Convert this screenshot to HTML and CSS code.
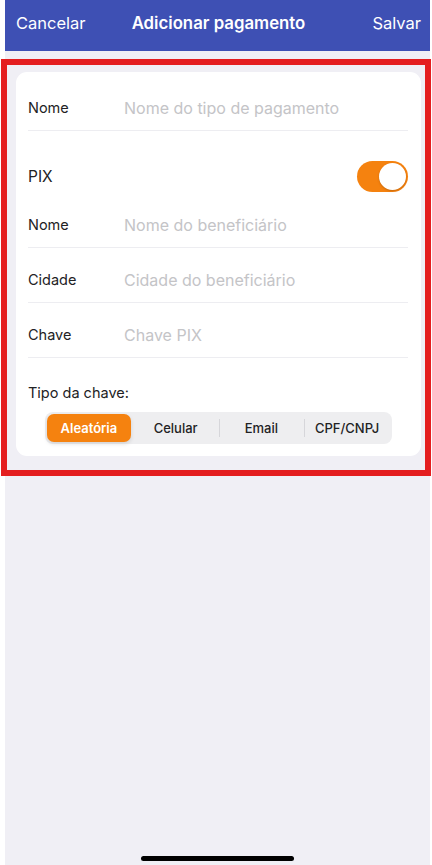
FILE: index.html
```html
<!DOCTYPE html>
<html lang="pt-BR">
<head>
<meta charset="utf-8">
<title>Adicionar pagamento</title>
<link rel="stylesheet" href="styles.css">
</head>
<body>
<div class="screen">
  <header class="navbar">
    <span class="nav-btn nav-left">Cancelar</span>
    <span class="nav-title">Adicionar pagamento</span>
    <span class="nav-btn nav-right">Salvar</span>
  </header>

  <main class="content">
    <section class="card">
      <div class="row">
        <span class="label">Nome</span>
        <span class="placeholder">Nome do tipo de pagamento</span>
      </div>

      <div class="toggle-row">
        <span class="pix-label">PIX</span>
        <span class="toggle"><span class="knob"></span></span>
      </div>

      <div class="row">
        <span class="label">Nome</span>
        <span class="placeholder">Nome do beneficiário</span>
      </div>
      <div class="row">
        <span class="label">Cidade</span>
        <span class="placeholder">Cidade do beneficiário</span>
      </div>
      <div class="row">
        <span class="label">Chave</span>
        <span class="placeholder">Chave PIX</span>
      </div>

      <div class="key-type">Tipo da chave:</div>
      <div class="segmented">
        <span class="seg seg-active">Aleatória</span>
        <span class="seg">Celular</span>
        <span class="seg seg-div">Email</span>
        <span class="seg seg-div">CPF/CNPJ</span>
      </div>
    </section>
  </main>

  <div class="home-indicator"></div>
</div>
<div class="highlight"></div>
</body>
</html>
```

FILE: styles.css
```css
* { box-sizing: border-box; }

html, body {
  margin: 0;
  padding: 0;
  background: #ffffff;
}

body {
  font-family: "Inter", "Liberation Sans", sans-serif;
  width: 432px;
  height: 865px;
  position: relative;
  overflow: hidden;
}

.screen {
  margin-left: 5px;
  width: 425px;
  height: 865px;
  background: #f0eff5;
  display: flex;
  flex-direction: column;
}

.navbar {
  height: 51px;
  background: #3e50b4;
  display: grid;
  grid-template-columns: 1fr auto 1fr;
  align-items: center;
  padding: 0 9px 5px 11px;
  color: #ffffff;
}

.nav-btn {
  font-size: 16.5px;
  font-weight: 400;
}

.nav-right { justify-self: end; }

.nav-title {
  font-size: 16.8px;
  font-weight: 600;
}

.content {
  padding: 21px 9px 0 11px;
}

.card {
  background: #ffffff;
  border-radius: 11px;
  padding: 4px 0 12px 0;
}

.row {
  height: 55px;
  margin: 0 13px 0 12px;
  padding-top: 9px;
  display: flex;
  align-items: center;
  border-bottom: 1px solid #ededf1;
}

.label {
  width: 96px;
  flex: none;
  font-size: 14.5px;
  color: #222224;
}

.placeholder {
  font-size: 16px;
  color: #c4c4c7;
}

.toggle-row {
  margin: 30px 13px 1px 12px;
  height: 31px;
  display: flex;
  align-items: center;
  justify-content: space-between;
}

.pix-label {
  font-size: 15.5px;
  color: #222224;
}

.toggle {
  width: 51px;
  height: 31px;
  border-radius: 16px;
  background: #f5820f;
  position: relative;
  display: block;
}

.knob {
  position: absolute;
  top: 2px;
  right: 2px;
  width: 27px;
  height: 27px;
  border-radius: 50%;
  background: #ffffff;
  box-shadow: 0 1px 2px rgba(120, 60, 0, 0.35);
}

.key-type {
  margin: 25px 12px 0 12px;
  height: 20px;
  line-height: 20px;
  font-size: 14.5px;
  color: #222224;
}

.segmented {
  margin: 9px auto 0 auto;
  width: 347px;
  height: 32px;
  background: #eeeef0;
  border-radius: 8px;
  padding: 2px;
  display: grid;
  grid-template-columns: repeat(4, 1fr);
  align-items: center;
}

.seg {
  height: 28px;
  display: flex;
  align-items: center;
  justify-content: center;
  font-size: 13px;
  font-weight: 500;
  color: #222224;
  position: relative;
}

.seg-div::before {
  content: "";
  position: absolute;
  left: 0;
  top: 5px;
  bottom: 5px;
  width: 1px;
  background: #d6d6da;
}

.seg-active {
  background: #f5820f;
  color: #ffffff;
  border-radius: 7px;
  font-weight: 600;
  box-shadow: 0 2px 4px rgba(0, 0, 0, 0.12);
  margin-right: 2px;
}

.home-indicator {
  margin: auto auto 4px auto;
  width: 153px;
  height: 5px;
  border-radius: 3px;
  background: #000000;
}

.highlight {
  position: absolute;
  left: 1px;
  top: 59px;
  width: 430px;
  height: 417px;
  border: 6px solid #e41e1f;
  pointer-events: none;
}
```
